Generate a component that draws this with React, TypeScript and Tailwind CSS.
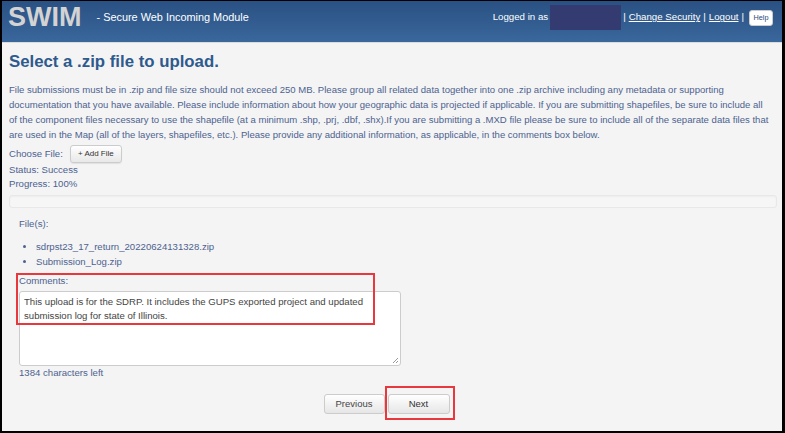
import React from "react";

export default function App() {
  const font = { fontFamily: '"Liberation Sans", Arial, sans-serif' };
  return (
    <div className="w-[785px] h-[433px] bg-black pl-[2px] pt-[1px] pr-[3px] pb-[2px]" style={font}>
      <div className="relative w-full h-full bg-[#f4f4f4] flex flex-col overflow-hidden">
        {/* Header */}
        <div className="h-[42px] shrink-0 bg-gradient-to-b from-[#2a5183] to-[#3a679c] flex items-start pl-[6px] pr-[9px] border-b border-[#dcdcdc]">
          <div className="text-[#d3d3d3] font-bold text-[27px] leading-none mt-[3px]">SWIM</div>
          <div className="text-white text-[10.9px] leading-[14px] ml-[15px] mt-[9px]">- Secure Web Incoming Module</div>
          <div className="ml-auto mt-[4px] h-[25px] flex items-center text-white text-[9.7px]">
            <span>Logged in as</span>
            <span className="w-[71px] h-[25px] bg-[#333b70] ml-[2px] mr-[2px]"></span>
            <span>|</span>
            <span className="underline ml-[3px]">Change Security</span>
            <span className="ml-[3px]">|</span>
            <span className="underline ml-[3px]">Logout</span>
            <span className="ml-[3px]">|</span>
            <span className="ml-[5px] w-[24px] h-[16px] flex items-center justify-center bg-white text-[#2a4a7a] text-[7.3px] rounded-[3px] leading-none border border-[#ccc]">Help</span>
          </div>
        </div>

        {/* Body */}
        <div className="pl-[7px] pr-[5px] pt-[9px] flex flex-col">
          <h1 className="text-[#2e5a8e] font-bold text-[16.8px] leading-[20px]">Select a .zip file to upload.</h1>
          <p className="text-[#4d6290] text-[9.55px] leading-[15px] mt-[10px] whitespace-nowrap">
            File submissions must be in .zip and file size should not exceed 250 MB. Please group all related data together into one .zip archive including any metadata or supporting
            <br />
            documentation that you have available. Please include information about how your geographic data is projected if applicable. If you are submitting shapefiles, be sure to include all
            <br />
            of the component files necessary to use the shapefile (at a minimum .shp, .prj, .dbf, .shx).If you are submitting a .MXD file please be sure to include all of the separate data files that
            <br />
            are used in the Map (all of the layers, shapefiles, etc.). Please provide any additional information, as applicable, in the comments box below.
          </p>
          <div className="flex items-center mt-[3px] h-[18px] text-[#4d6290] text-[9.6px]">
            <span>Choose File:</span>
            <span className="ml-[7px] w-[52px] h-[18px] flex items-center justify-center text-[#333] text-[8px] bg-gradient-to-b from-white to-[#e8e8e8] border border-[#ccc] rounded-[3px] shadow-[0_1px_1px_rgba(0,0,0,0.08)]">+ Add File</span>
          </div>
          <div className="text-[#4d6290] text-[9.6px] leading-[14px]">Status: Success</div>
          <div className="text-[#4d6290] text-[9.6px] leading-[14px]">Progress: 100%</div>
          <div className="h-[13px] mt-[4px] bg-[#f6f6f6] border border-[#e8e8e8] rounded-[3px] shadow-[inset_0_1px_2px_rgba(0,0,0,0.04)]"></div>

          <div className="pl-[10px] mt-[9px] text-[#4d6290] text-[9.6px]">
            <div className="leading-[14px]">File(s):</div>
            <ul className="list-disc pl-[17px] mt-[8px] leading-[15px]">
              <li>sdrpst23_17_return_20220624131328.zip</li>
              <li>Submission_Log.zip</li>
            </ul>
            <div className="mt-[5px] leading-[14px]">Comments:</div>
            <div className="mt-[3px] w-[382px] h-[75px] bg-white border border-[#ccc] rounded-[3px] px-[4px] pt-[3px] text-[#444] text-[9.6px] leading-[13.5px] relative">
              This upload is for the SDRP. It includes the GUPS exported project and updated submission log for state of Illinois.
              <svg className="absolute right-[1px] bottom-[1px]" width="7" height="7" viewBox="0 0 7 7">
                <path d="M1 6 L6 1 M4 6 L6 4" stroke="#999" strokeWidth="1" />
              </svg>
            </div>
            <div className="leading-[14px]">1384 characters left</div>
          </div>

          <div className="flex justify-center mt-[14px] pr-[13px] gap-[3px]">
            <span className="w-[61px] h-[20px] flex items-center justify-center text-[#444] text-[9.5px] bg-gradient-to-b from-white to-[#e6e6e6] border border-[#ccc] rounded-[3px]">Previous</span>
            <span className="w-[62px] h-[20px] flex items-center justify-center text-[#333] text-[9.5px] bg-gradient-to-b from-white to-[#e6e6e6] border border-[#ccc] rounded-[3px]">Next</span>
          </div>
        </div>

        {/* Annotation boxes */}
        <div className="absolute left-[14px] top-[272px] w-[359px] h-[52px] border-2 border-[#e8383d]"></div>
        <div className="absolute left-[383px] top-[385px] w-[70px] h-[34px] border-2 border-[#e8383d]"></div>
      </div>
    </div>
  );
}
